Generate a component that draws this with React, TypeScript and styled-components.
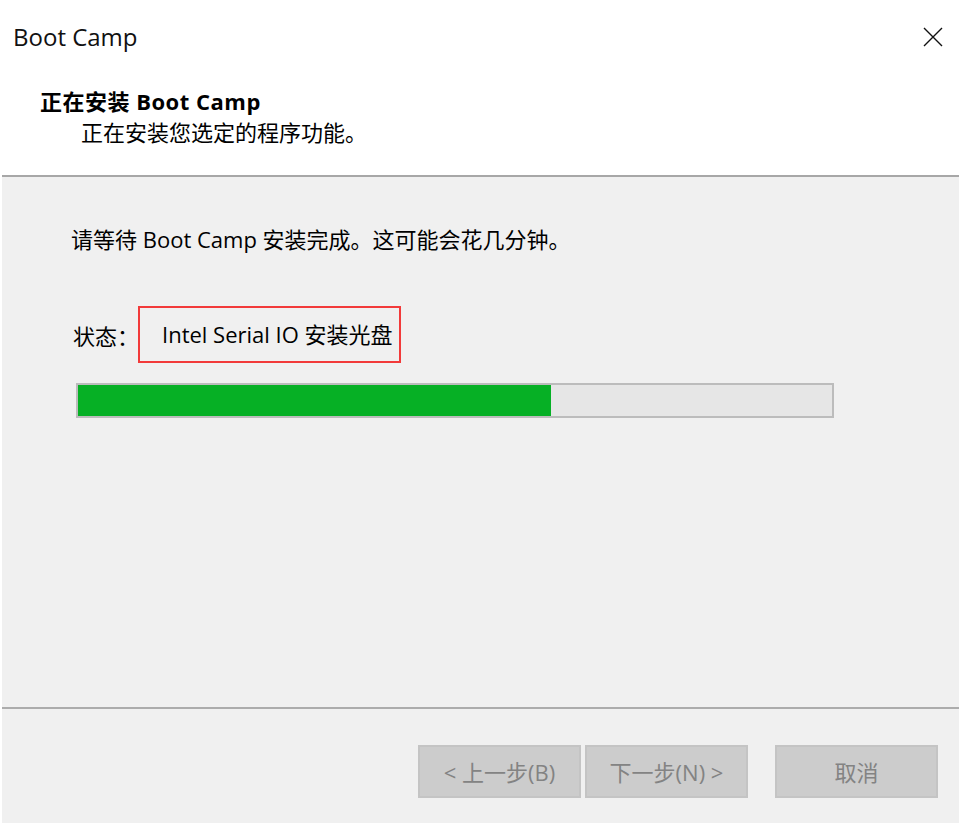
import styled, { createGlobalStyle } from 'styled-components';

const GlobalStyle = createGlobalStyle`
  html, body {
    margin: 0;
    padding: 0;
    background: #ffffff;
  }
  body {
    font-family: "Open Sans", "Noto Sans CJK SC", sans-serif;
    color: #000;
  }
`;

const StyledWindow = styled.div`
  width: 957px;
  height: 823px;
  margin-left: 2px;
  display: flex;
  flex-direction: column;
  background-color: #f0f0f0;
  font-size: 22px;
`;
const TitleBar = styled.div`
  height: 78px;
  flex-shrink: 0;
  display: flex;
  align-items: center;
  justify-content: space-between;
  padding: 0 14px 0 11px;
  background-color: #fff;
  box-sizing: border-box;
`;
const WindowTitle = styled.div`
  font-size: 24px;
  color: #111;
  margin-top: -5px;
`;
const CloseButton = styled.button`
  width: 24px;
  height: 24px;
  padding: 0;
  border: none;
  background: none;
  display: flex;
  align-items: center;
  justify-content: center;
  margin-top: -4px;
`;
const Header = styled.div`
  height: 99px;
  flex-shrink: 0;
  box-sizing: border-box;
  padding: 8px 0 0 38px;
  background-color: #fff;
  border-bottom: 2px solid #a7a7a7;
`;
const HeaderTitle = styled.div`
  font-size: 22px;
  font-weight: 700;
  line-height: 30px;
  letter-spacing: 0.5px;
`;
const HeaderSubtitle = styled.div`
  font-size: 22px;
  line-height: 32px;
  padding-left: 41px;
`;
const Body = styled.div`
  flex: 1;
  padding: 47px 0 0 69px;
  box-sizing: border-box;
`;
const Message = styled.div`
  line-height: 30px;
`;
const StatusRow = styled.div`
  display: flex;
  align-items: center;
  margin-top: 52px;
  padding-left: 2px;
`;
const StatusLabel = styled.span`
  flex-shrink: 0;
  white-space: nowrap;
  margin-right: -1px;
`;
const StatusBox = styled.div`
  width: 263px;
  height: 57px;
  flex-shrink: 0;
  box-sizing: border-box;
  border: 2px solid #f23a3a;
  display: flex;
  align-items: center;
  padding: 0 0 4px 22px;
  white-space: nowrap;
`;
const Progress = styled.div`
  width: 758px;
  height: 35px;
  margin: 20px 0 0 5px;
  box-sizing: border-box;
  border: 2px solid #bcbcbc;
  background-color: #e6e6e6;
`;
const ProgressFill = styled.div`
  height: 100%;
  background-color: #06b025;
`;
const Footer = styled.div`
  height: 116px;
  flex-shrink: 0;
  box-sizing: border-box;
  border-top: 2px solid #acacac;
  display: flex;
  justify-content: flex-end;
  align-items: flex-start;
  padding: 36px 21px 0 0;
`;
const WizardButton = styled.button<{ $gapLeft?: number }>`
  width: 163px;
  height: 53px;
  margin-left: ${(p) => p.$gapLeft ?? 0}px;
  box-sizing: border-box;
  border: 2px solid #c4c4c4;
  background-color: #cccccc;
  color: #838383;
  font-family: "Open Sans", "Noto Sans CJK SC", sans-serif;
  font-size: 22px;
  padding: 0 0 2px;
  white-space: nowrap;
`;

const progress = 62.7;

export default function App() {
  return (
    <StyledWindow>
      <GlobalStyle />
      <TitleBar>
        <WindowTitle>Boot Camp</WindowTitle>
        <CloseButton aria-label="关闭">
          <svg width="20" height="20" viewBox="0 0 20 20">
            <path d="M1 1 L19 19 M19 1 L1 19" stroke="#111" strokeWidth="1.4" fill="none" />
          </svg>
        </CloseButton>
      </TitleBar>
      <Header>
        <HeaderTitle>正在安装 Boot Camp</HeaderTitle>
        <HeaderSubtitle>正在安装您选定的程序功能。</HeaderSubtitle>
      </Header>
      <Body>
        <Message>请等待 Boot Camp 安装完成。这可能会花几分钟。</Message>
        <StatusRow>
          <StatusLabel>状态：</StatusLabel>
          <StatusBox>Intel Serial IO 安装光盘</StatusBox>
        </StatusRow>
        <Progress>
          <ProgressFill style={{ width: `${progress}%` }} />
        </Progress>
      </Body>
      <Footer>
        <WizardButton disabled>&lt; 上一步(B)</WizardButton>
        <WizardButton disabled $gapLeft={4}>下一步(N) &gt;</WizardButton>
        <WizardButton disabled $gapLeft={27}>取消</WizardButton>
      </Footer>
    </StyledWindow>
  );
}
